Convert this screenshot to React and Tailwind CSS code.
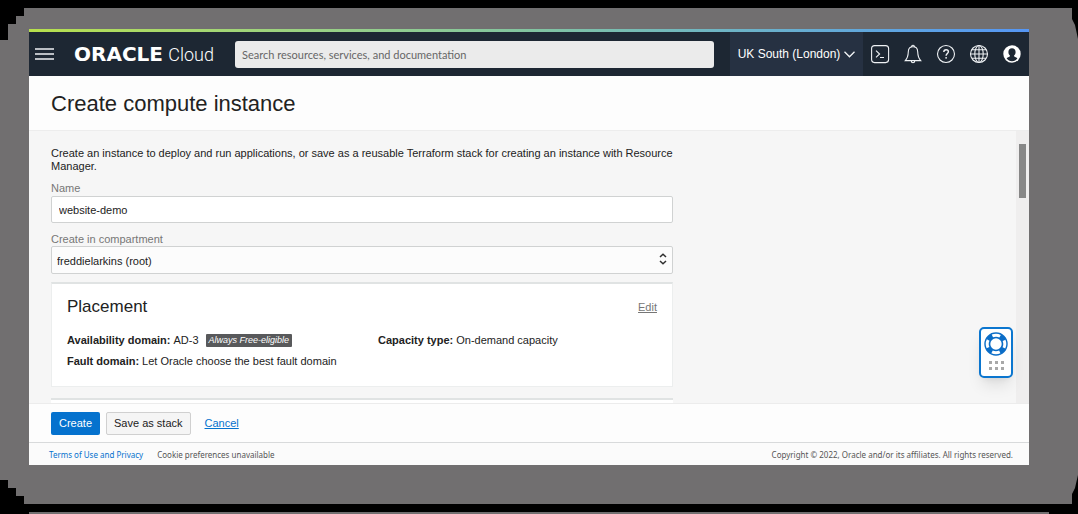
import React from "react";

function MenuIcon() {
  return (
    <svg width="19" height="12" viewBox="0 0 19 12" fill="none" stroke="#eef1f5" strokeWidth="1.7">
      <path d="M0 1h19M0 6h19M0 11h19" />
    </svg>
  );
}

function ChevronDown() {
  return (
    <svg width="11" height="7" viewBox="0 0 11 7" fill="none" stroke="#f3f5f7" strokeWidth="1.3">
      <path d="M.5.8l5 5 5-5" />
    </svg>
  );
}

const iconProps = {
  width: 20,
  height: 20,
  viewBox: "0 0 20 20",
  fill: "none",
  stroke: "#eef1f4",
  strokeWidth: 1.1,
  "aria-hidden": true,
};

function TerminalIcon() {
  return (
    <svg {...iconProps}>
      <rect x="1.6" y="1.6" width="17" height="17" rx="3" />
      <path d="M6 6.600l3.600 3.400L6 13.400M10 13.500h4" />
    </svg>
  );
}

function BellIcon() {
  return (
    <svg {...iconProps}>
      <path d="M8.700 3.100a1.400 1.400 0 1 1 2.600 0" />
      <path d="M10 2.800c-2.800 0-4.600 2-4.700 4.900-.1 4-.9 6.500-3 8.900h15.400c-2.100-2.400-2.900-4.900-3-8.900C14.600 4.800 12.800 2.800 10 2.800z" />
      <path d="M8.300 17a1.700 1.700 0 0 0 3.400 0" />
    </svg>
  );
}

function HelpIcon() {
  return (
    <svg {...iconProps}>
      <circle cx="10" cy="10" r="8.500" />
      <path d="M7.800 8.100c0-1.500 1-2.300 2.300-2.300s2.300.8 2.300 2c0 1.600-2.300 1.800-2.300 3.900" strokeWidth="1.400" />
      <circle cx="10.100" cy="13.800" r=".9" fill="#eef1f4" stroke="none" />
    </svg>
  );
}

function GlobeIcon() {
  return (
    <svg {...iconProps}>
      <circle cx="10" cy="10" r="8.500" />
      <ellipse cx="10" cy="10" rx="4.200" ry="8.500" />
      <path d="M10 1.500v17M1.500 10h17M2.800 5.800h14.400M2.800 14.200h14.400" />
    </svg>
  );
}

function ProfileIcon() {
  return (
    <svg {...iconProps}>
      <circle cx="10" cy="10" r="8.700" fill="#fff" stroke="none" />
      <path
        d="M10 4.200c-2.200 0-3.600 1.600-3.600 3.800 0 1.700.7 3 1.700 3.800-.1 1.200-2.100 1.300-3.500 2.400 1.200 1.900 3.200 3 5.400 3s4.200-1.100 5.400-3c-1.400-1.100-3.400-1.200-3.500-2.400 1-.8 1.700-2.100 1.700-3.800 0-2.200-1.400-3.800-3.600-3.800z"
        fill="#1d2733"
        stroke="none"
      />
    </svg>
  );
}

function SortArrows() {
  return (
    <svg
      className="pointer-events-none absolute top-[7px] right-1.5"
      width="8"
      height="12"
      viewBox="0 0 8 12"
      fill="none"
      stroke="#303030"
      strokeWidth="1.500"
    >
      <path d="M1 4l3-2.800L7 4M1 8l3 2.800L7 8" />
    </svg>
  );
}

function LifeRing() {
  return (
    <svg width="24" height="24" viewBox="0 0 24 24" fill="none" aria-hidden="true">
      <circle cx="12" cy="12" r="8.700" stroke="#0b6dc7" strokeWidth="6" />
      <circle
        cx="12"
        cy="12"
        r="8.800"
        stroke="#fff"
        strokeWidth="3"
        strokeDasharray="8 5.823"
        strokeDashoffset="4"
      />
    </svg>
  );
}

const tools = [
  { label: "Developer tools", Icon: TerminalIcon },
  { label: "Announcements", Icon: BellIcon },
  { label: "Help", Icon: HelpIcon },
  { label: "Language", Icon: GlobeIcon },
  { label: "Profile", Icon: ProfileIcon },
];

function Header() {
  return (
    <header className="shrink-0">
      <div className="h-[3px] bg-linear-to-r from-[#b7e04b] via-[#82c4a0] to-[#5596f5]" />
      <div className="flex h-11 items-center bg-[#1d2733] pr-[7px]">
        <button type="button" aria-label="Menu" className="ml-1.5 shrink-0">
          <MenuIcon />
        </button>
        <a href="#home" className="ml-5 flex w-[140px] shrink-0 items-baseline justify-between whitespace-nowrap text-white">
          <span className="font-['DejaVu_Sans',sans-serif] text-[20px] leading-6 font-bold">ORACLE</span>
          <span className="font-['Roboto',sans-serif] text-[18px] leading-6 font-light">Cloud</span>
        </a>
        <input
          type="search"
          aria-label="Search"
          placeholder="Search resources, services, and documentation"
          className="ml-[21px] h-[27px] w-[479px] min-w-0 rounded-[3px] bg-[#ebebeb] px-[7px] font-['Lato',sans-serif] text-[11px] placeholder:text-[#666]"
        />
        <button
          type="button"
          className="ml-auto flex h-full w-[133px] shrink-0 items-center justify-center gap-1 bg-[#263142] text-[12px] whitespace-nowrap text-white"
        >
          UK South (London)
          <ChevronDown />
        </button>
        <nav aria-label="Tools" className="ml-[7px] flex shrink-0 gap-[13px]">
          {tools.map(({ label, Icon }) => (
            <button key={label} type="button" aria-label={label}>
              <Icon />
            </button>
          ))}
        </nav>
      </div>
    </header>
  );
}

function Placement() {
  return (
    <section className="mt-2 h-[105px] border border-t-2 border-[#eceeee] border-t-[#e0e3e3] bg-white px-[15px]">
      <div className="mt-[11px] flex items-center justify-between">
        <h2 className="text-[17px] leading-6">Placement</h2>
        <a href="#edit" className="text-[11px] text-[#767676] underline">
          Edit
        </a>
      </div>
      <div className="mt-[11px] grid grid-cols-2 gap-x-8">
        <div className="flex flex-col gap-px">
          <p className="flex h-5 items-center whitespace-nowrap">
            <b>Availability domain:</b>
            <span className="ml-[3px]">AD-3</span>
            <span className="ml-[7px] rounded-[1px] bg-[#58595b] px-[3px] text-[9px] leading-[13px] text-white italic">
              Always Free-eligible
            </span>
          </p>
          <p className="flex h-5 items-center whitespace-nowrap">
            <b>Fault domain:</b>
            <span className="ml-[3px]">Let Oracle choose the best fault domain</span>
          </p>
        </div>
        <p className="flex h-5 items-center whitespace-nowrap">
          <b>Capacity type:</b>
          <span className="ml-[3px]">On-demand capacity</span>
        </p>
      </div>
    </section>
  );
}

function Content() {
  return (
    <main className="relative flex min-h-0 flex-1 overflow-hidden bg-[#f6f6f6]">
      <div className="min-w-0 flex-1 pl-[22px]">
        <div className="max-w-[622px] pt-4">
          <p className="leading-[13px]">
            Create an instance to deploy and run applications, or save as a reusable Terraform stack for creating an
            instance with Resource Manager.
          </p>
          <label htmlFor="name" className="mt-2 block leading-[14px] text-[#767676]">
            Name
          </label>
          <input
            id="name"
            type="text"
            defaultValue="website-demo"
            className="mt-px block h-[27px] w-full rounded-[2px] border border-[#d0d2d2] bg-white px-[7px]"
          />
          <label htmlFor="compartment" className="mt-[9px] block leading-[14px] text-[#767676]">
            Create in compartment
          </label>
          <div className="relative">
            <select
              id="compartment"
              className="block h-7 w-full appearance-none rounded-[2px] border border-[#d0d2d2] bg-[#fcfcfc] px-[5px] pt-0.5"
            >
              <option>freddielarkins (root)</option>
            </select>
            <SortArrows />
          </div>
          <Placement />
          <div className="mt-[11px] h-10 border-t-2 border-[#e0e3e3] bg-white" />
        </div>
      </div>
      <div className="w-[13px] shrink-0 bg-[#efeeee] px-[3px] pt-[13px]">
        <div className="h-[54px] bg-[#878787]" />
      </div>
      <button
        type="button"
        aria-label="Support"
        className="absolute right-4 bottom-[25px] flex h-[51px] w-[34px] flex-col items-center gap-[5px] rounded-[5px] border-2 border-[#0b76cf] bg-white pt-[3px] shadow-lg"
      >
        <LifeRing />
        <span className="grid grid-cols-3 gap-[3px]">
          {[0, 1, 2, 3, 4, 5].map((n) => (
            <span key={n} className="size-[3px] bg-[#a8a8a8]" />
          ))}
        </span>
      </button>
    </main>
  );
}

export default function App() {
  return (
    <div className="flex h-screen min-h-[420px] flex-col overflow-hidden bg-black pt-2 font-['Liberation_Sans',Arial,sans-serif] text-[11px] text-[#222]">
      <div className="flex min-h-0 flex-1 bg-[#716f70] pt-[21px] pr-[49px] pb-[39px] pl-[29px] [clip-path:polygon(24px_0,calc(100%_-_6px)_0,calc(100%_-_6px)_11px,calc(100%_-_3px)_17px,100%_31px,100%_calc(100%_-_29px),calc(100%_-_3px)_calc(100%_-_16px),calc(100%_-_6px)_calc(100%_-_10px),calc(100%_-_6px)_100%,24px_100%,24px_calc(100%_-_8px),16px_calc(100%_-_8px),16px_calc(100%_-_16px),8px_calc(100%_-_16px),8px_calc(100%_-_24px),0_calc(100%_-_24px),0_32px,8px_32px,8px_16px,16px_16px,16px_8px,24px_8px)]">
        <div className="flex min-w-0 flex-1 flex-col bg-[#fdfdfd]">
          <Header />
          <div className="flex h-[55px] shrink-0 items-center border-b border-[#ededed] pl-[22px]">
            <h1 className="text-[22px]">Create compute instance</h1>
          </div>
          <Content />
          <div className="flex h-10 shrink-0 items-center border-t border-b border-t-[#ececec] border-b-[#d8dadb] pl-[22px]">
            <button type="button" className="h-[23px] rounded-[2px] bg-[#0572ce] px-2 text-white">
              Create
            </button>
            <button type="button" className="ml-1.5 h-[23px] rounded-[2px] border border-[#d0d0d0] bg-[#f5f5f5] px-[7px]">
              Save as stack
            </button>
            <a href="#cancel" className="ml-3.5 text-[#0572ce] underline">
              Cancel
            </a>
          </div>
          <footer className="flex h-[22px] shrink-0 items-center bg-[#fbfbfb] pt-0.5 pr-4 pl-5 font-['Noto_Sans',sans-serif] text-[8px] text-[#555]">
            <a href="#terms" className="text-[#0572ce]">
              Terms of Use and Privacy
            </a>
            <span className="ml-3.5">Cookie preferences unavailable</span>
            <span className="ml-auto">Copyright © 2022, Oracle and/or its affiliates. All rights reserved.</span>
          </footer>
        </div>
      </div>
      <div className="mt-2 mr-[29px] ml-[29px] h-0.5 shrink-0 bg-[#716f70]" />
    </div>
  );
}
